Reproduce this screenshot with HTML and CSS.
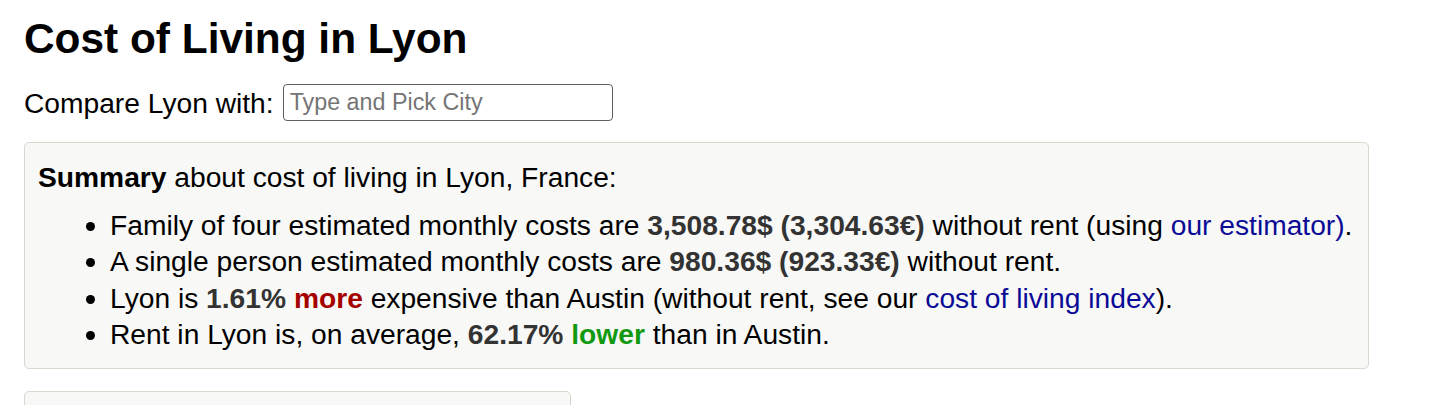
FILE: index.html
```html
<!DOCTYPE html>
<html lang="en">
<head>
<meta charset="utf-8">
<title>Cost of Living in Lyon</title>
<link rel="stylesheet" href="styles.css">
</head>
<body>
<main class="page">
  <h1 class="title">Cost of Living in Lyon</h1>
  <div class="compare">
    <label class="compare-label" for="city">Compare Lyon with:</label>
    <input class="city-input" id="city" type="text" placeholder="Type and Pick City">
  </div>
  <section class="summary">
    <div class="summary-head"><b class="summary-strong">Summary</b> about cost of living in Lyon, France:</div>
    <ul class="summary-list">
      <li>Family of four estimated monthly costs are <span class="num">3,508.78$ (3,304.63€)</span> without rent (using <a class="link" href="#">our estimator)</a>.</li>
      <li>A single person estimated monthly costs are <span class="num">980.36$ (923.33€)</span> without rent.</li>
      <li>Lyon is <span class="num">1.61%</span> <span class="more">more</span> expensive than Austin (without rent, see our <a class="link" href="#">cost of living index</a>).</li>
      <li>Rent in Lyon is, on average, <span class="num">62.17%</span> <span class="lower">lower</span> than in Austin.</li>
    </ul>
  </section>
  <section class="next-box"></section>
</main>
</body>
</html>
```
FILE: styles.css
```css
html, body {
  margin: 0;
  padding: 0;
  background: #ffffff;
}
body {
  font-family: "Liberation Sans", Arial, Helvetica, sans-serif;
  font-size: 28.2px;
  line-height: 36.5px;
  color: #000;
}
.page {
  padding: 15px 0 0 24px;
  display: flex;
  flex-direction: column;
  align-items: flex-start;
}
.title {
  margin: 0;
  font-size: 42.4px;
  line-height: 48px;
  font-weight: bold;
}
.compare {
  margin-top: 21px;
  display: flex;
  align-items: center;
  gap: 9px;
  height: 36px;
}
.compare-label {
  margin-top: 2px;
}
.city-input {
  box-sizing: border-box;
  width: 330px;
  height: 37px;
  margin: 0;
  border: 1.5px solid #5e5e5e;
  border-radius: 4px;
  padding: 0 6px;
  font-family: "Liberation Sans", Arial, Helvetica, sans-serif;
  font-size: 23.3px;
  background: #fff;
}
.city-input::placeholder {
  color: #757575;
}
.summary {
  box-sizing: border-box;
  margin-top: 22px;
  width: 1345px;
  padding: 16px 4px 15px 13px;
  background: #f8f8f6;
  border: 1.5px solid #d8d8ce;
  border-radius: 5px;
}
.summary-strong {
  font-weight: bold;
}
.summary-list {
  margin: 11px 0 0 0;
  padding-left: 72px;
}
.summary-list li {
  white-space: nowrap;
}
.num {
  font-weight: bold;
  color: #333;
}
.more {
  font-weight: bold;
  color: #a50000;
}
.lower {
  font-weight: bold;
  color: #119911;
}
.link {
  color: #0b0b96;
  text-decoration: none;
}
.next-box {
  box-sizing: border-box;
  margin-top: 22px;
  width: 547px;
  height: 60px;
  background: #f8f8f6;
  border: 1.5px solid #d8d8ce;
  border-radius: 5px;
}
```
